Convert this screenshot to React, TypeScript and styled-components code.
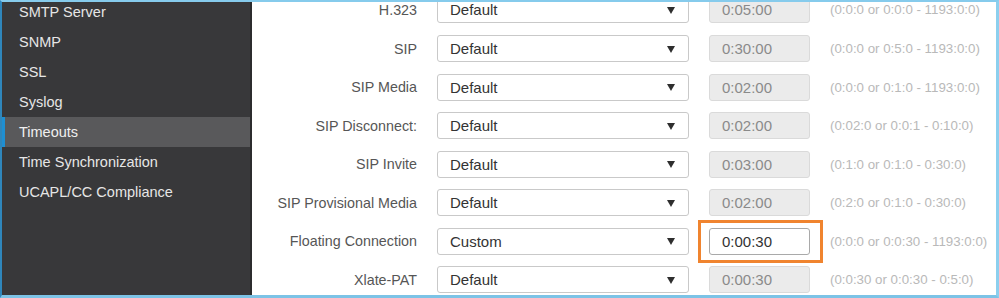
import React from 'react'
import styled, { createGlobalStyle } from 'styled-components';

const GlobalStyle = createGlobalStyle`
	html, body {
		margin: 0;
		padding: 0;
		background: #ffffff;
	}
	body {
		font-family: 'Liberation Sans', Arial, sans-serif;
	}
`;

const Frame = styled.div`
	width: 999px;
	height: 298px;
	box-sizing: border-box;
	display: flex;
	overflow: hidden;
	border-style: solid;
	border-width: 2px 3px 3px 2px;
	border-color: #86cbec #8ccfee #7cc3e6 #2f86bb;
	background: #ffffff;
`;

const Sidebar = styled.nav`
	width: 248px;
	flex-shrink: 0;
	background: #38383a;
	border-right: 2px solid #2c2c2e;
	display: flex;
	flex-direction: column;
	margin-top: -5px;
`;

const NavItem = styled.div<{ $active?: boolean }>`
	height: 30px;
	display: flex;
	align-items: center;
	padding-left: 17px;
	font-size: 14.5px;
	color: ${p => (p.$active ? '#f0f0f0' : '#e6e6e6')};
	background: ${p => (p.$active ? '#59595b' : 'transparent')};
	box-shadow: ${p => (p.$active ? 'inset 3px 0 0 #1f8fd2' : 'none')};
`;

const Form = styled.div`
	flex: 1;
	display: grid;
	grid-template-columns: 165px 252px 101px auto;
	grid-auto-rows: 38.55px;
	column-gap: 20px;
	align-items: center;
	align-content: start;
	margin-top: -11.3px;
`;

const Label = styled.div`
	text-align: right;
	font-size: 14.3px;
	color: #565656;
	white-space: nowrap;
`;

const Select = styled.div`
	height: 27px;
	box-sizing: border-box;
	border: 1px solid #c9c9c9;
	border-radius: 3px;
	background: #fff;
	display: flex;
	align-items: center;
	justify-content: space-between;
	padding: 0 13px 0 12px;
	font-size: 15px;
	color: #333;
`;

const Arrow = styled.span`
	width: 0;
	height: 0;
	border-left: 4.5px solid transparent;
	border-right: 4.5px solid transparent;
	border-top: 7px solid #2e2e2e;
	margin-top: 1px;
`;

const TimeWrap = styled.div<{ $marked?: boolean }>`
	position: relative;
	${p => p.$marked && `
		&::after {
			content: '';
			position: absolute;
			top: -8px;
			bottom: -8px;
			left: -11px;
			right: -13px;
			border: 3px solid #f0842f;
			pointer-events: none;
		}
	`}
`;

const TimeInput = styled.div<{ $editable?: boolean }>`
	height: 27px;
	box-sizing: border-box;
	border: 1px solid ${p => (p.$editable ? '#a9a9a9' : '#dadada')};
	border-radius: 3px;
	background: ${p => (p.$editable ? '#ffffff' : '#ebebeb')};
	display: flex;
	align-items: center;
	padding-left: 12px;
	font-size: 15px;
	color: ${p => (p.$editable ? '#333' : '#8a8a8a')};
`;

const Hint = styled.div`
	font-size: 13.3px;
	color: #b9b9b9;
	white-space: nowrap;
`;

const navItems = [
	'SMTP Server',
	'SNMP',
	'SSL',
	'Syslog',
	'Timeouts',
	'Time Synchronization',
	'UCAPL/CC Compliance',
];

const rows = [
	{ label: 'H.323', mode: 'Default', time: '0:05:00', hint: '(0:0:0 or 0:0:0 - 1193:0:0)' },
	{ label: 'SIP', mode: 'Default', time: '0:30:00', hint: '(0:0:0 or 0:5:0 - 1193:0:0)' },
	{ label: 'SIP Media', mode: 'Default', time: '0:02:00', hint: '(0:0:0 or 0:1:0 - 1193:0:0)' },
	{ label: 'SIP Disconnect:', mode: 'Default', time: '0:02:00', hint: '(0:02:0 or 0:0:1 - 0:10:0)' },
	{ label: 'SIP Invite', mode: 'Default', time: '0:03:00', hint: '(0:1:0 or 0:1:0 - 0:30:0)' },
	{ label: 'SIP Provisional Media', mode: 'Default', time: '0:02:00', hint: '(0:2:0 or 0:1:0 - 0:30:0)' },
	{ label: 'Floating Connection', mode: 'Custom', time: '0:00:30', hint: '(0:0:0 or 0:0:30 - 1193:0:0)' },
	{ label: 'Xlate-PAT', mode: 'Default', time: '0:00:30', hint: '(0:0:30 or 0:0:30 - 0:5:0)' },
];

export default function App() {
	return (
		<>
			<GlobalStyle />
			<Frame>
				<Sidebar>
					{navItems.map(name => (
						<NavItem key={name} $active={name === 'Timeouts'}>{name}</NavItem>
					))}
				</Sidebar>
				<Form>
					{rows.map(row => {
						const custom = row.mode === 'Custom';
						return (
							<React.Fragment key={row.label}>
								<Label>{row.label}</Label>
								<Select>
									<span>{row.mode}</span>
									<Arrow />
								</Select>
								<TimeWrap $marked={custom}>
									<TimeInput $editable={custom}>{row.time}</TimeInput>
								</TimeWrap>
								<Hint>{row.hint}</Hint>
							</React.Fragment>
						);
					})}
				</Form>
			</Frame>
		</>
	);
}
